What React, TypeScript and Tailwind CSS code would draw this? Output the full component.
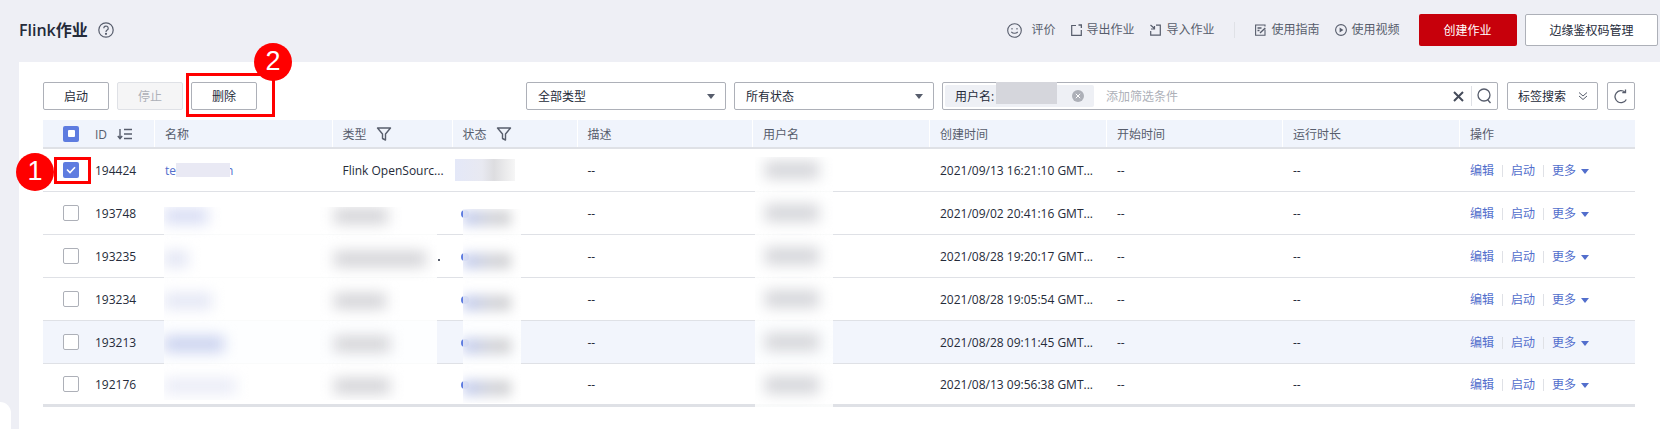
import { ReactNode } from 'react'

const columns = 'grid grid-cols-[111px_177.5px_120px_125px_175.5px_177px_177px_176px_177px_176px]'

const rows = [
    { id: '194424', created: '2021/09/13 16:21:10 GMT...' },
    { id: '193748', created: '2021/09/02 20:41:16 GMT...' },
    { id: '193235', created: '2021/08/28 19:20:17 GMT...' },
    { id: '193234', created: '2021/08/28 19:05:54 GMT...' },
    { id: '193213', created: '2021/08/28 09:11:45 GMT...' },
    { id: '192176', created: '2021/08/13 09:56:38 GMT...' },
]

// widths of the blurred-out name and type text, rows 2 to 6
const blurs = [
    { name: 44, type: 54, tone: 'bg-[#d8ddf4]' },
    { name: 24, type: 92, tone: 'bg-[#e2e5f4]' },
    { name: 48, type: 52, tone: 'bg-[#e4e7f5]' },
    { name: 60, type: 56, tone: 'bg-[#c9d1ef]' },
    { name: 72, type: 56, tone: 'bg-[#eaecf7]' },
]

function Cell({ children, className = '' }: { children?: ReactNode; className?: string }) {
    return <div className={`flex items-center whitespace-nowrap pl-[11px] pt-[2px] ${className}`}>{children}</div>
}

function HeadCell({ children }: { children: ReactNode }) {
    return <Cell className="border-l border-white bg-[#f0f4fc] !pl-[10px]">{children}</Cell>
}

function Funnel() {
    return (
        <svg width="16" height="16" viewBox="0 0 16 16" fill="none" stroke="#575d6c" strokeWidth="1.4" className="ml-[9px] -mt-[2px]">
            <path d="M1.5 2h13L9.5 8v6l-3-1.5V8z" strokeLinejoin="round" />
        </svg>
    )
}

function Caret({ className = '' }: { className?: string }) {
    return (
        <svg width="8" height="5" viewBox="0 0 8 5" className={className}>
            <path d="M0 0h8L4 5z" fill="currentColor" />
        </svg>
    )
}

function ToolButton({ children, disabled }: { children: ReactNode; disabled?: boolean }) {
    return (
        <button
            className={`h-7 w-[66px] rounded-[2px] border pt-[2px] text-xs ${
                disabled ? 'border-[#dfe1e6] bg-[#f5f5f6] text-[#adb0b8]' : 'border-[#adb0b8] bg-white text-[#252b3a]'
            }`}
        >
            {children}
        </button>
    )
}

function HeaderLink({ icon, children, gap }: { icon: ReactNode; children: ReactNode; gap: string }) {
    return (
        <div className={`flex items-center ${gap}`}>
            {icon}
            <span>{children}</span>
        </div>
    )
}

function Select({ label }: { label: string }) {
    return (
        <div className="flex h-7 w-[200px] items-center justify-between rounded-[2px] border border-[#adb0b8] pl-[11px] pr-[10px] text-xs text-[#252b3a]">
            <span className="pt-[2px]">{label}</span>
            <Caret className="text-[#575d6c]" />
        </div>
    )
}

function Badge({ children, className }: { children: ReactNode; className: string }) {
    return (
        <div className={`absolute flex h-[38px] w-[38px] items-center justify-center rounded-full bg-[#ff0000] font-['Liberation_Sans',sans-serif] text-[27px] text-white ${className}`}>
            {children}
        </div>
    )
}

function Checkbox({ checked }: { checked?: boolean }) {
    if (checked) {
        return (
            <span className="-mt-[2px] flex h-4 w-4 shrink-0 items-center justify-center rounded-[2px] bg-[#5e7ce0]">
                <svg width="10" height="8" viewBox="0 0 10 8" fill="none" stroke="white" strokeWidth="1.6">
                    <path d="M1 3.5 4 6.5 9 1.2" />
                </svg>
            </span>
        )
    }
    return <span className="-mt-[2px] h-4 w-4 shrink-0 rounded-[2px] border border-[#adb0b8] bg-white" />
}

export default function App() {
    return (
        <div className="relative h-[429px] w-[1660px] overflow-hidden bg-[#eeeff5] font-['Open_Sans','Noto_Sans_CJK_SC',sans-serif] text-xs text-[#252b3a]">
            {/* Page header */}
            <div className="flex h-[62px] items-center pb-[2px] pl-[19px] pr-[2px]">
                <h1 className="w-[79px] text-base font-semibold text-[#252b3a]">Flink作业</h1>
                <svg width="16" height="16" viewBox="0 0 16 16" fill="none" stroke="#575d6c" strokeWidth="1.2">
                    <circle cx="8" cy="8" r="7.2" />
                    <path d="M5.8 6.3a2.2 2.2 0 1 1 3.4 1.8c-.8.5-1.2.9-1.2 1.8" />
                    <circle cx="8" cy="11.8" r=".5" fill="#575d6c" />
                </svg>

                <div className="ml-auto flex items-center text-[#575d6c]">
                    <HeaderLink
                        gap="gap-[9px]"
                        icon={
                            <svg width="15" height="15" viewBox="0 0 15 15" fill="none" stroke="#575d6c" strokeWidth="1.1">
                                <circle cx="7.5" cy="7.5" r="6.8" />
                                <path d="M4.3 8.8c1.6 2 4.8 2 6.4 0" />
                                <path d="M5 5v1.4M10 5v1.4" />
                            </svg>
                        }
                    >
                        评价
                    </HeaderLink>
                    <div className="ml-4">
                        <HeaderLink
                            gap="gap-1"
                            icon={
                                <svg width="11" height="12" viewBox="0 0 11 12" fill="none" stroke="#575d6c" strokeWidth="1.2">
                                    <path d="M5 1.5H.7v9.8h9.6V6" />
                                    <path d="M7.5 1h3v3" strokeWidth="1.6" />
                                </svg>
                            }
                        >
                            导出作业
                        </HeaderLink>
                    </div>
                    <div className="ml-4">
                        <HeaderLink
                            gap="gap-[5px]"
                            icon={
                                <svg width="11" height="12" viewBox="0 0 11 12" fill="none" stroke="#575d6c" strokeWidth="1.2">
                                    <path d="M6 1.2h4.3v10H.7V7" />
                                    <path d="M.5 1l4 3.5M1 5h3.5V2" />
                                </svg>
                            }
                        >
                            导入作业
                        </HeaderLink>
                    </div>
                    <span className="ml-5 h-[16px] w-px bg-[#dfe1e6]" />
                    <div className="ml-5">
                        <HeaderLink
                            gap="gap-[5px]"
                            icon={
                                <svg width="11" height="12" viewBox="0 0 11 12" fill="none" stroke="#575d6c" strokeWidth="1.1">
                                    <path d="M10 5.5v5.8H.6V1h9.4v1.5" />
                                    <path d="M2.5 4h4M2.5 6.5h2M5 9l5.3-5" strokeWidth="1.4" />
                                </svg>
                            }
                        >
                            使用指南
                        </HeaderLink>
                    </div>
                    <div className="ml-4">
                        <HeaderLink
                            gap="gap-1"
                            icon={
                                <svg width="12" height="12" viewBox="0 0 12 12" fill="none" stroke="#575d6c" strokeWidth="1.1">
                                    <circle cx="6" cy="6" r="5.4" />
                                    <path d="M4.6 3.4 8.4 6 4.6 8.6z" fill="#575d6c" stroke="none" />
                                </svg>
                            }
                        >
                            使用视频
                        </HeaderLink>
                    </div>
                    <button className="ml-[19px] h-8 w-[98px] rounded-[2px] bg-[#c7000b] pt-px text-xs text-white">创建作业</button>
                    <button className="ml-[8.5px] h-8 w-[133px] rounded-[2px] border border-[#adb0b8] bg-white pt-px text-xs text-[#252b3a]">
                        边缘鉴权码管理
                    </button>
                </div>
            </div>

            {/* Content panel */}
            <div className="ml-[19px] h-[367px] bg-white pl-6 pr-[25px] pt-5">
                <div className="flex h-7 justify-between">
                    <div className="flex gap-2">
                        <ToolButton>启动</ToolButton>
                        <ToolButton disabled>停止</ToolButton>
                        <ToolButton>删除</ToolButton>
                    </div>
                    <div className="flex">
                        <Select label="全部类型" />
                        <div className="ml-2">
                            <Select label="所有状态" />
                        </div>
                        <div className="ml-2 flex h-7 w-[556px] items-center rounded-[2px] border border-[#adb0b8] pl-[2px] pr-[5px]">
                            <div className="relative flex h-[22px] w-[149px] items-center rounded-[2px] bg-[#eef0f5] pl-[10px] pt-[2px]">
                                用户名:
                                <span className="absolute left-[51px] top-[-3px] h-[22px] w-[61px] bg-[#d5d6dc]" />
                                <span className="absolute left-[127px] top-[5px] flex h-3 w-3 items-center justify-center rounded-full bg-[#adb0b8]">
                                    <svg width="6" height="6" viewBox="0 0 6 6" stroke="white" strokeWidth="1">
                                        <path d="M.8.8l4.4 4.4M5.2.8.8 5.2" />
                                    </svg>
                                </span>
                            </div>
                            <span className="ml-3 pt-[2px] text-[#adb0b8]">添加筛选条件</span>
                            <svg width="11" height="11" viewBox="0 0 11 11" stroke="#454b5a" strokeWidth="2" className="ml-auto">
                                <path d="M1 1l9 9M10 1l-9 9" />
                            </svg>
                            <span className="ml-[7px] h-5 w-px bg-[#dfe1e6]" />
                            <svg width="15" height="16" viewBox="0 0 15 16" fill="none" stroke="#575d6c" strokeWidth="1.3" className="ml-[5px]">
                                <circle cx="7" cy="7" r="6" />
                                <path d="M10.5 11.5l3 3.5" />
                            </svg>
                        </div>
                        <div className="ml-[9px] flex h-7 w-[91px] items-center justify-between rounded-[2px] border border-[#adb0b8] pl-[10px] pr-[9px]">
                            <span className="pt-[2px]">标签搜索</span>
                            <svg width="10" height="10" viewBox="0 0 10 10" fill="none" stroke="#575d6c" strokeWidth="1">
                                <path d="M1 1.5l4 3.5 4-3.5M1 5l4 3.5L9 5" />
                            </svg>
                        </div>
                        <div className="ml-[9px] flex h-7 w-7 items-center justify-center rounded-[2px] border border-[#adb0b8]">
                            <svg width="14" height="15" viewBox="0 0 14 15" fill="none" stroke="#575d6c" strokeWidth="1.3">
                                <path d="M12.3 10.5A6 6 0 1 1 11 3.2" />
                                <path d="M11.5.5v3.2H8.3" />
                            </svg>
                        </div>
                    </div>
                </div>

                {/* Table */}
                <div className="mt-[10px]">
                    <div className={`${columns} h-[29px] border-b-2 border-[#dfe1e6] text-[#575d6c]`}>
                        <Cell className="gap-4 bg-[#f0f4fc] !pl-5">
                            <span className="-mt-[2px] flex h-4 w-4 items-center justify-center rounded-[2px] bg-[#5e7ce0]">
                                <span className="h-[7px] w-[7px] rounded-[1px] bg-white" />
                            </span>
                            ID
                            <svg width="16" height="12" viewBox="0 0 16 12" fill="none" stroke="#575d6c" strokeWidth="1.4" className="-ml-[6px] -mt-[2px]">
                                <path d="M3 1v9.5M.8 8l2.2 2.6L5.2 8M7 1.5h8M7 6h8M7 10.5h8" />
                            </svg>
                        </Cell>
                        <HeadCell>名称</HeadCell>
                        <HeadCell>
                            类型
                            <Funnel />
                        </HeadCell>
                        <HeadCell>
                            状态
                            <Funnel />
                        </HeadCell>
                        <HeadCell>描述</HeadCell>
                        <HeadCell>用户名</HeadCell>
                        <HeadCell>创建时间</HeadCell>
                        <HeadCell>开始时间</HeadCell>
                        <HeadCell>运行时长</HeadCell>
                        <HeadCell>操作</HeadCell>
                    </div>

                    {rows.map((row, i) => (
                        <div
                            key={row.id}
                            className={`${columns} h-[43px] ${i === 5 ? 'border-b-[3px] border-[#dfe1e6]' : 'border-b border-[#dfe1e6]'} ${i === 4 ? 'bg-[#f2f5fc]' : ''}`}
                        >
                            <Cell className="gap-4 !pl-5">
                                <Checkbox checked={i === 0} />
                                {row.id}
                            </Cell>
                            <Cell className="text-[#526ecc]">
                                {i === 0 && (
                                    <>
                                        te
                                        <span className="relative z-10 -mt-[2px] h-[14px] w-[54px] bg-[#e9e9f4]" />
                                        <span className="-ml-[4px]">n</span>
                                    </>
                                )}
                            </Cell>
                            <Cell>
                                {i === 0 && 'Flink OpenSourc...'}
                                {i === 2 && <span className="ml-[95px] mt-[6px] h-[2px] w-[2px] bg-[#575d6c]" />}
                            </Cell>
                            <Cell className={i === 0 ? '!pl-[3px]' : '!pl-[9px]'}>
                                {i === 0 ? (
                                    <span className="-mt-[2px] h-[22px] w-[60px] bg-[linear-gradient(90deg,#e4e8f8,#e8e9f1_45%,#dddde0_65%,#f6f6f6)]" />
                                ) : (
                                    <span className="h-2 w-2 rounded-full bg-[#5e7ce0]" />
                                )}
                            </Cell>
                            <Cell>--</Cell>
                            <Cell />
                            <Cell>{row.created}</Cell>
                            <Cell>--</Cell>
                            <Cell>--</Cell>
                            <Cell className="text-[#526ecc]">
                                编辑
                                <span className="mx-2 h-3 w-px bg-[#dfe1e6]" />
                                启动
                                <span className="mx-2 h-3 w-px bg-[#dfe1e6]" />
                                更多
                                <Caret className="ml-[5px]" />
                            </Cell>
                        </div>
                    ))}
                </div>
            </div>

            {/* Redacted name and type cells */}
            <div className="absolute left-[164px] top-[207px] h-[193px] w-[273px] overflow-hidden bg-white/85">
                {blurs.map((blur, i) => (
                    <div key={i} className="grid h-[42.5px] grid-cols-[170px_1fr] pt-px">
                        <span className={`h-[16px] blur-[7px] ${blur.tone}`} style={{ width: blur.name }} />
                        <span className="h-[16px] bg-[#d4d4d8] blur-[7px]" style={{ width: blur.type }} />
                    </div>
                ))}
            </div>

            {/* Redacted status cells */}
            <div className="absolute left-[463px] top-[209px] h-[194px] w-[58px] overflow-hidden bg-white/85">
                {blurs.map((_, i) => (
                    <div key={i} className="h-[42.5px] pt-px">
                        <span className="block h-[16px] w-[48px] bg-[linear-gradient(90deg,#c3cdf2,#d4d5da_60%,#d2d2d4)] blur-[6px]" />
                    </div>
                ))}
            </div>

            {/* Redacted user names */}
            <div className="absolute left-[755px] top-[157px] h-[250px] w-[78px] overflow-hidden bg-white/85">
                {rows.map(row => (
                    <div key={row.id} className="h-[43px] pl-[10px] pt-1">
                        <span className="block h-[18px] w-[54px] bg-[#d6d7db] blur-[7px]" />
                    </div>
                ))}
            </div>

            {/* Annotations */}
            <div className="absolute left-[186px] top-[73px] h-[44px] w-[89px] border-[3px] border-[#ff0000]" />
            <div className="absolute left-[54px] top-[157px] h-[27px] w-[37px] border-[3px] border-[#ff0000]" />
            <Badge className="left-[254px] top-[43px]">2</Badge>
            <Badge className="left-[16px] top-[153px]">1</Badge>

            {/* Corner of the floating widget bottom left */}
            <div className="absolute bottom-0 left-0 h-[27px] w-[11px] rounded-tr-xl bg-white" />
        </div>
    )
}
